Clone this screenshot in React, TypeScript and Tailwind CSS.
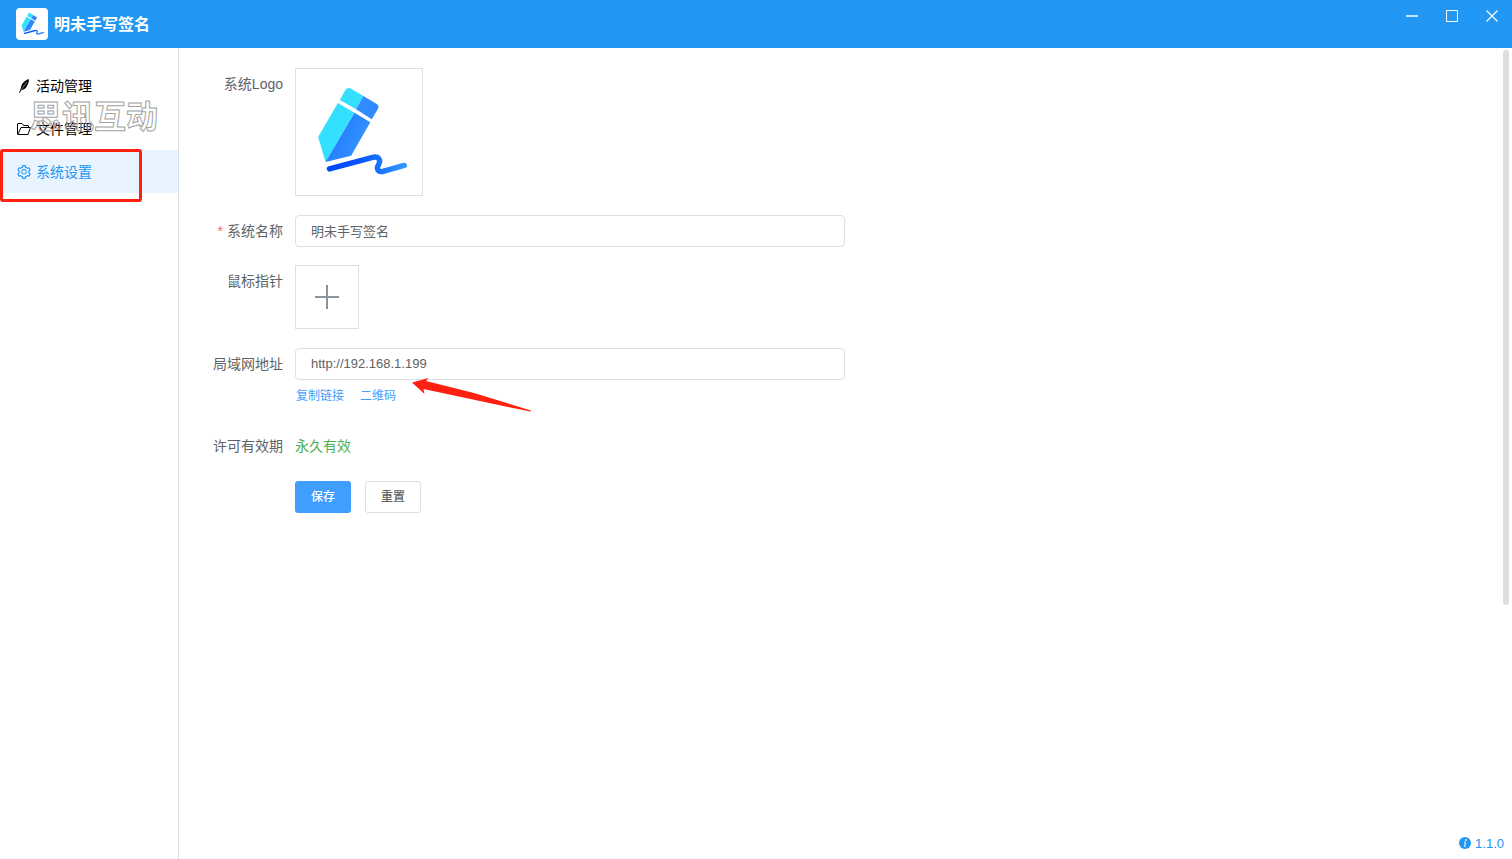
import React from "react";
import { AiOutlineSetting } from "react-icons/ai";

const Logo = ({ className }: { className?: string }) => (
  <svg viewBox="0 0 128 128" fill="none" className={className} aria-hidden="true">
    <defs>
      <linearGradient id="pen-side" x1="40" y1="75" x2="62" y2="86" gradientUnits="userSpaceOnUse">
        <stop stopColor="#2680ff" />
        <stop offset="1" stopColor="#3392ff" />
      </linearGradient>
      <linearGradient id="pen-line" x1="34" y1="100" x2="112" y2="98" gradientUnits="userSpaceOnUse">
        <stop stopColor="#0048ff" />
        <stop offset="0.4" stopColor="#0a57ff" />
        <stop offset="1" stopColor="#3399ff" />
      </linearGradient>
    </defs>
    <path d="M44.500 31.500 50 21.500Q52.500 18 56 20L68.500 27.500 61 41Z" fill="#33e1ff" />
    <path d="M68.500 27.500 82 35.500Q85 37.500 83 41L77 51 61 41Z" fill="#2f8bff" />
    <path d="M42.500 34.500 59.500 44.500 30 94.500 22.500 69Z" fill="#33e1ff" />
    <path d="M59.500 44.500 75.500 54 56 88 30 94.500Z" fill="url(#pen-side)" />
    <path
      d="M34 101.500 77 90C84 88 86.500 92 84 97C80.500 103 85 105.500 90 103.500L110 98"
      stroke="url(#pen-line)"
      strokeWidth="5.500"
      strokeLinecap="round"
      strokeLinejoin="round"
    />
  </svg>
);

const FeatherIcon = () => (
  <svg viewBox="0 0 16 16" className="size-4" aria-hidden="true">
    <path
      d="M12.800 1C9.800 1.800 6.500 4.600 5.400 7.800C4.900 9.300 4.700 10.300 4.500 11.300L3 14.700L3.700 15L5.200 12.200C7.600 12 9.800 10.400 11 8C12.400 5.300 13.200 3 12.800 1Z"
      fill="currentColor"
    />
    <path d="M10.800 4 5.400 11.500" stroke="#fff" strokeWidth="0.500" />
  </svg>
);

const FolderIcon = () => (
  <svg viewBox="0 0 16 16" fill="none" stroke="currentColor" strokeLinejoin="round" className="size-4" aria-hidden="true">
    <path d="M12.500 6.500V5Q12.500 4.500 12 4.500H7.500L6 2.500H2Q1.500 2.500 1.500 3V13Q1.500 13.500 2 13.500H12L14.500 6.500H5L2 13" />
  </svg>
);

const menus = [
  { name: "活动管理", icon: <FeatherIcon /> },
  { name: "文件管理", icon: <FolderIcon /> },
  { name: "系统设置", icon: <AiOutlineSetting className="size-4" />, active: true },
];

const Header = () => (
  <header className="flex h-12 shrink-0 items-start justify-between bg-[#2196f3] text-white">
    <div className="flex h-12 items-center gap-1.5 pl-4">
      <div className="flex size-8 items-center justify-center rounded bg-white">
        <Logo className="size-8" />
      </div>
      <h1 className="pt-0.5 text-base font-bold">明未手写签名</h1>
    </div>
    <div className="flex h-8">
      <button aria-label="最小化" className="flex w-10 items-center justify-center">
        <svg viewBox="0 0 14 14" fill="none" stroke="currentColor" className="size-3.5">
          <path d="M1 7h12" strokeWidth="1.500" />
        </svg>
      </button>
      <button aria-label="最大化" className="flex w-10 items-center justify-center">
        <svg viewBox="0 0 14 14" fill="none" stroke="currentColor" className="size-3.5">
          <path d="M1.500 1.500h11v11h-11z" />
        </svg>
      </button>
      <button aria-label="关闭" className="flex w-10 items-center justify-center">
        <svg viewBox="0 0 14 14" fill="none" stroke="currentColor" className="size-3.5">
          <path d="M1.500 1.500l11 11M12.500 1.500l-11 11" strokeWidth="1.200" />
        </svg>
      </button>
    </div>
  </header>
);

const Sidebar = () => (
  <aside className="w-[179px] shrink-0 border-r border-[#dcdfe6] pt-4">
    <nav>
      {menus.map((menu) => (
        <a
          key={menu.name}
          href="#"
          className={
            menu.active
              ? "flex h-[43px] items-center gap-1 bg-[#e8f4ff] pl-4 text-sm text-[#2196f3]"
              : "flex h-[43px] items-center gap-1 pl-4 text-sm text-black"
          }
        >
          {menu.icon}
          {menu.name}
        </a>
      ))}
    </nav>
  </aside>
);

const labelStyle = "w-[100px] shrink-0 pr-3 text-right text-sm leading-8 text-[#606266]";
const inputStyle =
  "h-8 w-full max-w-[550px] rounded border border-[#dcdfe6] px-[15px] pb-0.5 text-[13px] text-[#606266] outline-none";

const SettingForm = () => (
  <form className="flex flex-col">
    <div className="mb-[19px] flex">
      <span className={labelStyle}>系统Logo</span>
      <button type="button" aria-label="系统Logo" className="size-32 border border-[#dcdfe6]">
        <Logo className="size-full" />
      </button>
    </div>
    <div className="mb-[18px] flex">
      <label htmlFor="name" className={labelStyle}>
        <span className="mr-1 text-[#f56c6c]">*</span>系统名称
      </label>
      <input id="name" defaultValue="明未手写签名" className={inputStyle} />
    </div>
    <div className="mb-[19px] flex">
      <span className={labelStyle}>鼠标指针</span>
      <button
        type="button"
        aria-label="鼠标指针"
        className="flex size-16 items-center justify-center border border-[#dcdfe6] text-[#8c939d]"
      >
        <svg viewBox="0 0 26 26" stroke="currentColor" strokeWidth="2" className="size-[26px]">
          <path d="M13 1v24M1 13h24" />
        </svg>
      </button>
    </div>
    <div className="flex">
      <label htmlFor="address" className={labelStyle}>
        局域网地址
      </label>
      <input id="address" defaultValue="http://192.168.1.199" className={inputStyle} />
    </div>
    <div className="mb-[18px] flex h-8 items-center gap-4 pl-[101px] text-xs text-[#409eff]">
      <a href="#">复制链接</a>
      <a href="#">二维码</a>
    </div>
    <div className="mb-[19px] flex">
      <span className={labelStyle}>许可有效期</span>
      <span className="text-sm leading-8 text-[#4caf50]">永久有效</span>
    </div>
    <div className="flex gap-3.5 pl-[100px] text-xs">
      <button type="submit" className="h-8 w-14 rounded-[3px] bg-[#409eff] font-medium text-white">
        保存
      </button>
      <button type="reset" className="h-8 w-14 rounded-[3px] border border-[#dcdfe6] font-medium text-[#606266]">
        重置
      </button>
    </div>
  </form>
);

// marks drawn on top of the page
const Annotations = () => (
  <div className="pointer-events-none">
    <div className="absolute top-[97px] left-[30px] text-[32px] leading-10 font-bold text-transparent [-webkit-text-stroke:1px_#a3a3a3]">
      思讯互动
    </div>
    <div className="absolute top-[149px] left-0 h-[53px] w-[142px] rounded-[3px] border-3 border-[#ff2010]" />
    <svg viewBox="0 0 120 34" className="absolute top-[378px] left-[412px] h-[34px] w-[120px]" aria-hidden="true">
      <path d="M0 4.500 16.500 0 14 3 62 15 119 32.500 118.500 33.500 96 29 11.500 11 12.500 16Z" fill="#ff2010" />
    </svg>
  </div>
);

const App = () => {
  return (
    <div className="relative flex h-screen flex-col overflow-hidden bg-white font-['Liberation_Sans','Noto_Sans_CJK_SC',sans-serif]">
      <Header />
      <div className="flex min-h-0 flex-1">
        <Sidebar />
        <main className="relative flex-1 px-4 pt-5">
          <SettingForm />
          <div className="absolute top-0.5 right-[3px] h-[555px] w-1.5 rounded-full bg-[#dddee0]" />
          <div className="absolute right-2 bottom-1.5 flex items-center gap-1 text-[13px] text-[#2196f3]">
            <svg viewBox="0 0 12 12" className="size-3" aria-hidden="true">
              <circle cx="6" cy="6" r="6" fill="currentColor" />
              <circle cx="6.900" cy="3" r="0.900" fill="#fff" />
              <path d="M5 5.200h1.500L5.500 9.300h1.200" fill="none" stroke="#fff" />
            </svg>
            1.1.0
          </div>
        </main>
      </div>
      <Annotations />
    </div>
  );
};

export default App;
